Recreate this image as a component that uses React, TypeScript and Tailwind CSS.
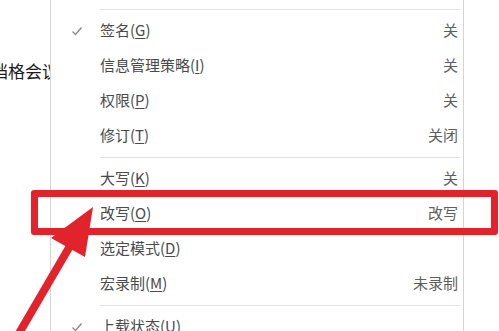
import React from 'react';

type Item = { label: string; key: string; value?: string; checked?: boolean };

const groups: Item[][] = [
  [{ label: '字数统计', key: 'W', value: '' }],
  [
    { label: '签名', key: 'G', value: '关', checked: true },
    { label: '信息管理策略', key: 'I', value: '关' },
    { label: '权限', key: 'P', value: '关' },
    { label: '修订', key: 'T', value: '关闭' },
  ],
  [
    { label: '大写', key: 'K', value: '关' },
    { label: '改写', key: 'O', value: '改写' },
    { label: '选定模式', key: 'D' },
    { label: '宏录制', key: 'M', value: '未录制' },
  ],
  [{ label: '上载状态', key: 'U', checked: true }],
];

const Check = () => (
  <svg width="12" height="10" viewBox="0 0 12 10" className="text-[#8a8a8a]">
    <polyline points="1.5,5.5 4.5,8.5 10.5,1.5" fill="none" stroke="currentColor" strokeWidth="1.4" />
  </svg>
);

const MenuRow = ({ item }: { item: Item }) => (
  <div className="flex h-[35px] items-center pr-[5px]">
    <div className="flex w-[49px] items-center justify-center pl-[2px]">{item.checked && <Check />}</div>
    <span className="flex-1 text-[15px] text-[#4a4a4a]">
      {item.label}(<span className="underline underline-offset-2">{item.key}</span>)
    </span>
    {item.value && <span className="text-[15px] text-[#5e5e5e]">{item.value}</span>}
  </div>
);

const App: React.FC = () => {
  return (
    <div className="relative h-[331px] w-[499px] overflow-hidden bg-white font-['Noto_Sans_CJK_SC','Microsoft_YaHei',sans-serif]">
      <div className="flex h-full">
        <div className="w-[50px] shrink-0 overflow-hidden pt-[59px]">
          <p className="-ml-[9px] whitespace-nowrap text-[17px] leading-[24px] text-[#1a1a1a]">档格会议</p>
        </div>
        <div className="w-[414px] shrink-0 border-x border-[#d4d4d4] bg-white">
          <div className="-mt-[30px]">
            {groups.map((group, gi) => (
              <div key={gi}>
                {gi > 0 && (
                  <div className="flex h-[8px] items-center pl-[49px] pr-[3px]">
                    <div className="h-px w-full bg-[#e3e3e3]" />
                  </div>
                )}
                {group.map((item) => (
                  <MenuRow key={item.key} item={item} />
                ))}
              </div>
            ))}
          </div>
        </div>
      </div>

      {/* red highlight box */}
      <div className="pointer-events-none absolute left-[31px] top-[190px] h-[45px] w-[467px] rounded-[3px] border-[7px] border-[#e1242b]" />

      {/* red arrow */}
      <svg className="pointer-events-none absolute left-0 top-0" width="499" height="331" viewBox="0 0 499 331">
        <line x1="18" y1="335" x2="70" y2="246" stroke="#e1242b" strokeWidth="8" />
        <polygon points="93,207 51,238 85,257" fill="#e1242b" />
      </svg>
    </div>
  );
};

export default App;
